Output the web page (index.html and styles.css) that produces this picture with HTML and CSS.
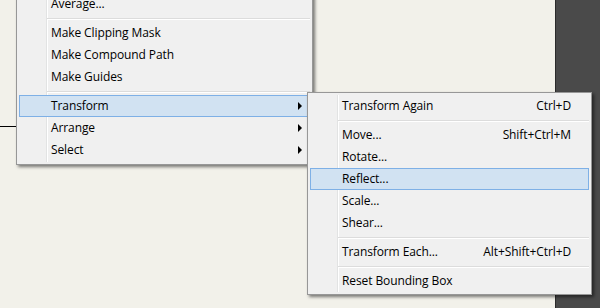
FILE: index.html
```html
<!DOCTYPE html>
<html lang="en">
<head>
    <meta charset="UTF-8">
    <title>Object Menu - Transform</title>
    <link rel="stylesheet" href="styles.css">
</head>
<body>
    <div class="workspace">
        <div class="canvas">
            <!-- path edge peeking out from under the menu -->
            <div class="path-line"></div>

            <!-- Object menu (scrolled, top is cut off) -->
            <div class="menu main-menu">
                <div class="item">Average...</div>
                <div class="sep"></div>
                <div class="item">Make Clipping Mask</div>
                <div class="item">Make Compound Path</div>
                <div class="item">Make Guides</div>
                <div class="sep"></div>
                <div class="item has-sub active">Transform<span class="arrow"></span></div>
                <div class="item has-sub">Arrange<span class="arrow"></span></div>
                <div class="item has-sub">Select<span class="arrow"></span></div>
            </div>

            <!-- Transform submenu -->
            <div class="menu sub-menu">
                <div class="item">Transform Again<span class="key">Ctrl+D</span></div>
                <div class="sep"></div>
                <div class="item">Move...<span class="key">Shift+Ctrl+M</span></div>
                <div class="item">Rotate...</div>
                <div class="item active">Reflect...</div>
                <div class="item">Scale...</div>
                <div class="item">Shear...</div>
                <div class="sep"></div>
                <div class="item">Transform Each...<span class="key">Alt+Shift+Ctrl+D</span></div>
                <div class="sep"></div>
                <div class="item">Reset Bounding Box</div>
            </div>
        </div>
        <div class="side-panel"></div>
    </div>
</body>
</html>
```

FILE: styles.css
```css
body {
    margin: 0;
    font-family: 'Open Sans', 'Noto Sans', sans-serif;
    font-size: 12px;
    color: #000;
}

.workspace {
    display: flex;
    width: 600px;
    height: 308px;
    overflow: hidden;
}

.canvas {
    position: relative;
    flex: 1;
    background-color: #f2f1ea;
}

.side-panel {
    width: 44px;
    background-color: #4a4a4a;
    border-left: 1px solid #2b2b2b;
}

.path-line {
    position: absolute;
    left: 0;
    top: 126px;
    width: 17px;
    height: 1px;
    background-color: #000;
}

/* Menus */
.menu {
    position: absolute;
    box-sizing: border-box;
    background-color: #f0f0f0;
    border: 1px solid #979797;
    padding: 2px;
    box-shadow: 2px 2px 3px rgba(0, 0, 0, 0.5);
}

.menu::before {
    content: "";
    position: absolute;
    left: 29px;
    top: 2px;
    bottom: 2px;
    width: 1px;
    background-color: #e2e3e3;
    border-right: 1px solid #fff;
}

.main-menu {
    left: 16px;
    top: -10px;
    width: 297px;
    padding-bottom: 3px;
}

.sub-menu {
    left: 307px;
    top: 92px;
    width: 285px;
}

.item {
    position: relative;
    display: flex;
    align-items: center;
    height: 22px;
    box-sizing: border-box;
    border: 1px solid transparent;
    padding: 0 17px 0 31px;
    line-height: 20px;
    white-space: nowrap;
    letter-spacing: -0.1px;
}

.item.active {
    background-color: #d1e2f2;
    border-color: #7eb0e6;
}

.key {
    margin-left: auto;
}

.arrow {
    margin-left: auto;
    margin-right: -10px;
    width: 0;
    height: 0;
    border-top: 4px solid transparent;
    border-bottom: 4px solid transparent;
    border-left: 4px solid #000;
}

.sep {
    position: relative;
    height: 7px;
    margin-left: 28px;
}

.sep::after {
    content: "";
    position: absolute;
    left: 0;
    right: 0;
    top: 3px;
    height: 1px;
    background-color: #dcdcdc;
    border-bottom: 1px solid #fff;
}
```
